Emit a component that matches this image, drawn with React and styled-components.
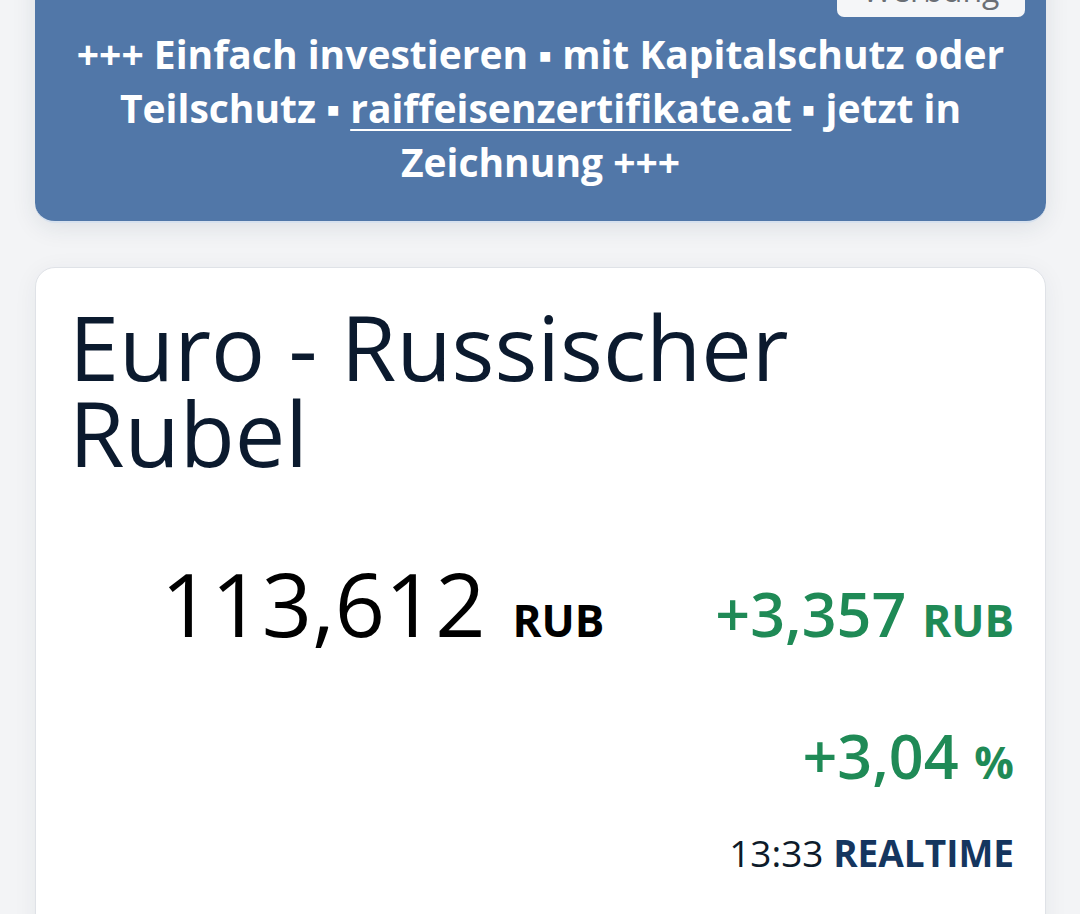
import React from 'react'
import styled, { createGlobalStyle } from 'styled-components'

const GlobalStyle = createGlobalStyle`
  html, body {
    margin: 0;
    padding: 0;
    background: #f3f4f6;
    font-family: 'Open Sans', 'Noto Sans', sans-serif;
    overflow: hidden;
  }
`

const Page = styled.div`
  display: flex;
  flex-direction: column;
  gap: 44px;
  padding: 0 34px 0 35px;
  height: 914px;
`

const Banner = styled.div`
  position: relative;
  margin-top: -40px;
  padding: 67px 20px 32px;
  background: #5177a8;
  border-radius: 20px;
  border-bottom: 2px solid #d7e1ee;
  box-shadow: 0 4px 24px rgba(30, 45, 70, 0.10);
  color: #fff;
  text-align: center;
  font-weight: 700;
  font-size: 39px;
  line-height: 54px;
`

const AdLabel = styled.span`
  position: absolute;
  top: 10px;
  right: 21px;
  width: 188px;
  height: 47px;
  background: #f5f6f8;
  border-radius: 7px;
  color: #6b6f75;
  font-weight: 400;
  font-size: 32px;
  line-height: 40px;
  text-align: center;
`

const AdLink = styled.a`
  color: #fff;
  text-decoration: underline;
  text-underline-offset: 6px;
  text-decoration-thickness: 2px;
`

const Card = styled.section`
  background: #fff;
  border: 1px solid #dfe2e7;
  border-radius: 20px;
  padding: 35px 31px 0 33px;
  flex: 1;
  margin-bottom: -40px;
  box-shadow: 0 4px 24px rgba(30, 45, 70, 0.06);
`

const Title = styled.h1`
  margin: 0;
  font-size: 90px;
  line-height: 86px;
  font-weight: 500;
  color: #0b1a2e;
`

const Quote = styled.div`
  display: flex;
  align-items: baseline;
  justify-content: space-between;
  margin-top: 78px;
`

const Price = styled.div`
  margin-left: 92px;
  font-size: 88px;
  line-height: 100px;
  color: #000;
`

const Unit = styled.span`
  font-size: 44px;
  font-weight: 700;
  margin-left: ${({ gap }) => gap || 0}px;
`

const Changes = styled.div`
  display: flex;
  flex-direction: column;
  align-items: flex-end;
`

const Change = styled.div`
  color: #1f8a56;
  font-size: 61px;
  font-weight: 600;
  line-height: 60px;
  margin-top: ${({ top }) => top || 0}px;
`

const Time = styled.div`
  margin-top: 39px;
  font-size: 37px;
  line-height: 44px;
  color: #0d1b2a;
`

const Source = styled.span`
  font-weight: 700;
  color: #15365f;
`

export default function App() {
  return (
    <>
      <GlobalStyle />
      <Page>
        <Banner>
          <AdLabel>Werbung</AdLabel>
          +++ Einfach investieren ▪ mit Kapitalschutz oder
          <br />
          Teilschutz ▪ <AdLink href="#">raiffeisenzertifikate.at</AdLink> ▪ jetzt in
          <br />
          Zeichnung +++
        </Banner>
        <Card>
          <Title>
            Euro - Russischer
            <br />
            Rubel
          </Title>
          <Quote>
            <Price>
              113,612 <Unit gap={4}>RUB</Unit>
            </Price>
            <Changes>
              <Change>
                +3,357 <Unit>RUB</Unit>
              </Change>
              <Change top={76}>
                +3,04 <Unit>%</Unit>
              </Change>
              <Time>
                13:33 <Source>REALTIME</Source>
              </Time>
            </Changes>
          </Quote>
        </Card>
      </Page>
    </>
  )
}
